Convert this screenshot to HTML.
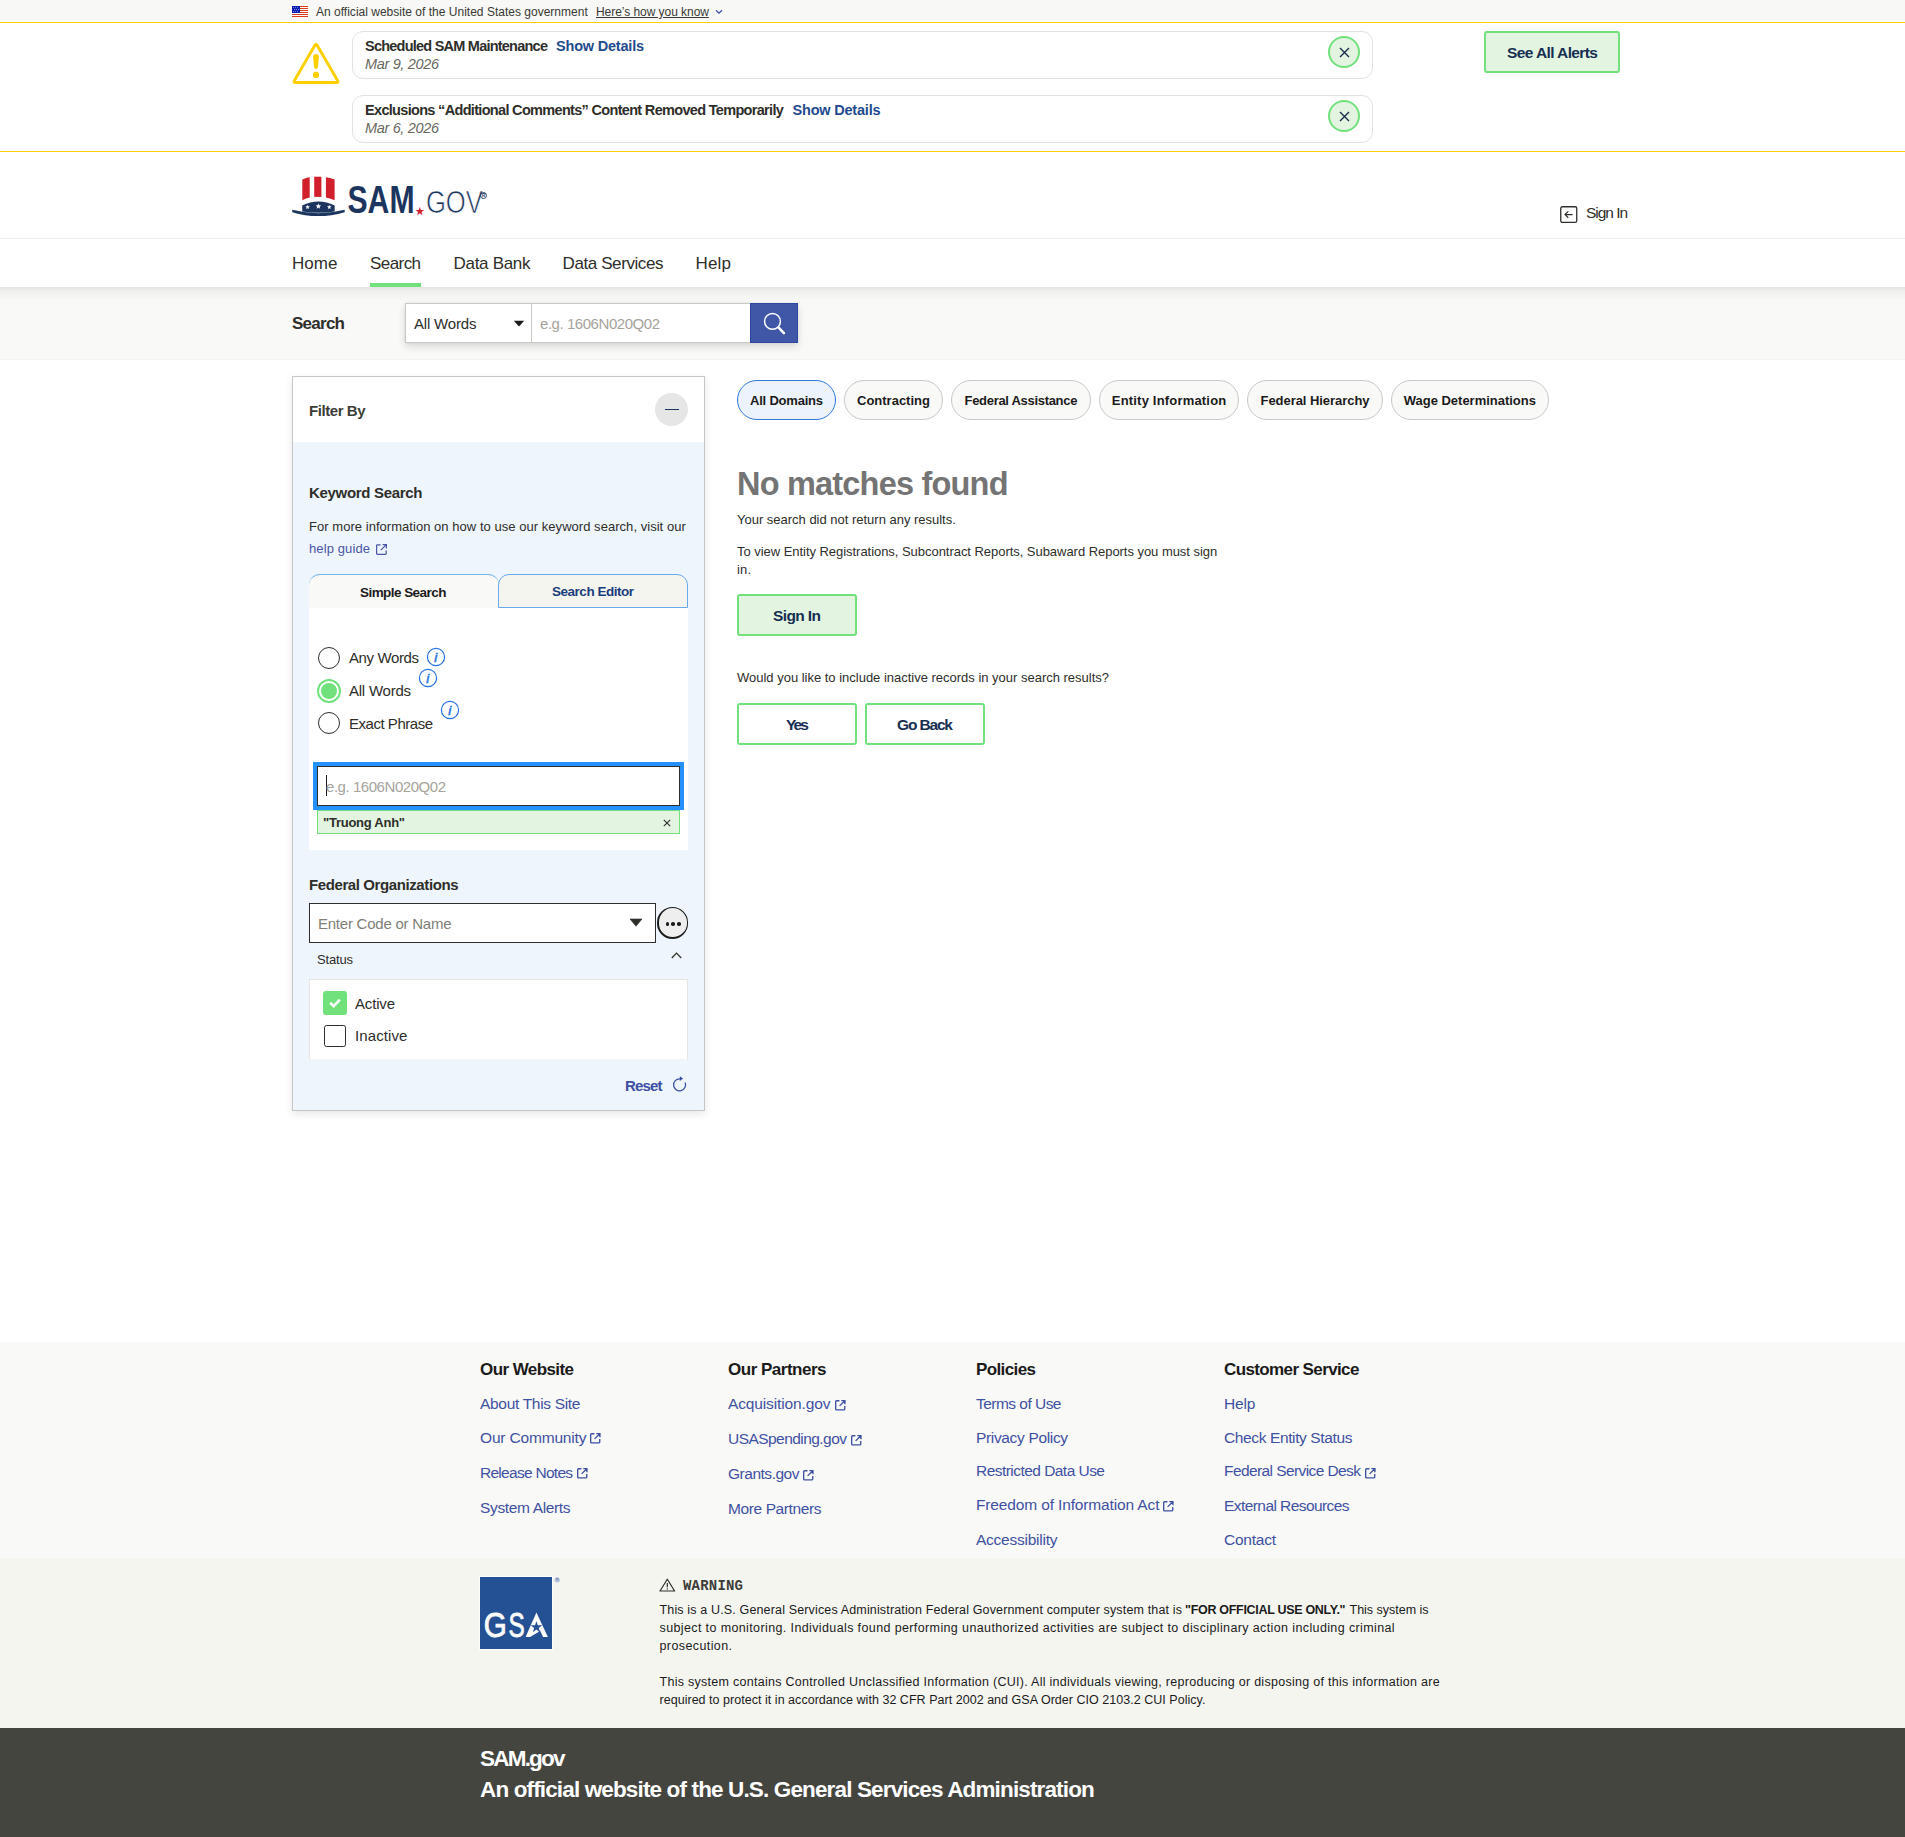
<!DOCTYPE html>
<html lang="en"><head>
<meta charset="utf-8">
<title>SAM.gov | Search</title>
<style>
*{box-sizing:border-box;margin:0;padding:0}
html,body{width:1905px;height:1837px;overflow:hidden;background:#fff}
body{position:relative;font-family:"Liberation Sans",sans-serif;color:#2e2e2a;font-size:15px}
.a{position:absolute}
.t{position:absolute;white-space:nowrap;line-height:20px;height:20px}
.b{font-weight:bold}
.i{font-style:italic}
.lnk{color:#3f51a8}
.box{position:absolute}
svg{position:absolute;overflow:visible}
</style>
</head>
<body>
<!-- gov banner -->
<div class="box" style="left:0;top:0;width:1905px;height:21px;background:#f8f8f6"></div>
<svg style="left:291px;top:5px" width="18" height="13" viewBox="-1 -1 18 13">
<rect x="-1" y="-1" width="18" height="13" fill="#fcfcfc"></rect>
<rect width="16" height="11" fill="#fff"></rect>
<g fill="#dc3a1c"><rect y="0" width="16" height="1"></rect><rect y="2" width="16" height="1"></rect><rect y="4" width="16" height="1"></rect><rect y="6" width="16" height="1"></rect><rect y="8" width="16" height="1"></rect><rect y="10" width="16" height="1"></rect></g>
<rect width="8" height="7" fill="#0b1fb4"></rect><circle cx="1.4" cy="1.6" r="0.45" fill="#fff"></circle><circle cx="3.5" cy="1.6" r="0.45" fill="#fff"></circle><circle cx="5.6" cy="1.6" r="0.45" fill="#fff"></circle><circle cx="2.4" cy="3.5" r="0.45" fill="#fff"></circle><circle cx="4.5" cy="3.5" r="0.45" fill="#fff"></circle><circle cx="6.6" cy="3.5" r="0.45" fill="#fff"></circle><circle cx="1.4" cy="5.4" r="0.45" fill="#fff"></circle><circle cx="3.5" cy="5.4" r="0.45" fill="#fff"></circle><circle cx="5.6" cy="5.4" r="0.45" fill="#fff"></circle>
</svg>
<span class="t" style="left: 316px; top: 2px; font-size: 12px; color: rgb(58, 58, 53); letter-spacing: 0.01px;">An official website of the United States government</span>
<span class="t" style="left: 596px; top: 2px; font-size: 12px; color: rgb(58, 58, 53); text-decoration: underline; letter-spacing: -0.05px;">Here’s how you know</span>
<svg style="left:715px;top:9px" width="8" height="6" viewBox="0 0 8 6"><path d="M1 1.2 L4 4.2 L7 1.2" fill="none" stroke="#3f51a8" stroke-width="1.3"></path></svg>
<!-- alerts -->
<div class="box" style="left:0;top:22px;width:1905px;height:1px;background:#face00"></div>
<div class="box" style="left:0;top:151px;width:1905px;height:1px;background:#face00"></div>
<svg style="left:291px;top:41px" width="50" height="44" viewBox="0 0 50 44">
<path d="M23.9 4.2 Q25 2.3 26.1 4.2 L46.6 39.6 Q47.7 41.5 45.5 41.5 L4.5 41.5 Q2.3 41.5 3.4 39.6 Z" fill="none" stroke="#fad000" stroke-width="2.9" stroke-linejoin="round"></path>
<path d="M22.05 16 Q22.05 13.1 25 13.1 Q27.95 13.1 27.95 16 L26.9 26.2 Q26.9 28 25 28 Q23.1 28 23.1 26.2 Z" fill="#fad000"></path>
<circle cx="25" cy="33.9" r="3.15" fill="#fad000"></circle>
</svg>
<div class="box" style="left:352px;top:31px;width:1021px;height:48px;border:1px solid #e2e2de;border-radius:11px;background:#fff"></div>
<div class="box" style="left:352px;top:95px;width:1021px;height:48px;border:1px solid #e2e2de;border-radius:11px;background:#fff"></div>
<span class="t b" style="left: 365px; top: 36px; font-size: 14.5px; letter-spacing: -0.77px;">Scheduled SAM Maintenance</span>
<span class="t b" style="left: 556px; top: 36px; font-size: 14.5px; color: rgb(31, 75, 142); letter-spacing: -0.2px;">Show Details</span>
<span class="t i" style="left: 365px; top: 54px; font-size: 14.5px; color: rgb(104, 104, 96); letter-spacing: -0.34px;">Mar 9, 2026</span>
<span class="t b" style="left: 365px; top: 100px; font-size: 14.5px; letter-spacing: -0.68px;">Exclusions “Additional Comments” Content Removed Temporarily</span>
<span class="t b" style="left: 792.5px; top: 100px; font-size: 14.5px; color: rgb(31, 75, 142); letter-spacing: -0.2px;">Show Details</span>
<span class="t i" style="left: 365px; top: 118px; font-size: 14.5px; color: rgb(104, 104, 96); letter-spacing: -0.34px;">Mar 6, 2026</span>
<div class="box" style="left:1328px;top:36px;width:32px;height:32px;border:2px solid #70e17b;border-radius:50%;background:#e3f5e1"></div>
<div class="box" style="left:1328px;top:100px;width:32px;height:32px;border:2px solid #70e17b;border-radius:50%;background:#e3f5e1"></div>
<svg style="left:1338.5px;top:46.5px" width="11" height="11" viewBox="0 0 11 11"><path d="M1 1 L10 10 M10 1 L1 10" stroke="#1b2b4b" stroke-width="1.4"></path></svg>
<svg style="left:1338.5px;top:110.5px" width="11" height="11" viewBox="0 0 11 11"><path d="M1 1 L10 10 M10 1 L1 10" stroke="#1b2b4b" stroke-width="1.4"></path></svg>
<div class="box" style="left:1484px;top:31px;width:136px;height:42px;border:2px solid #70e17b;border-radius:3px;background:#e3f5e1"></div>
<span class="t b" style="left: 1507px; top: 43px; font-size: 15.5px; color: rgb(22, 46, 81); letter-spacing: -0.6px;">See All Alerts</span>

<!-- header -->
<svg style="left:290px;top:174px" width="200" height="46" viewBox="0 0 200 46">
<g fill="#d11f2c">
<path d="M12.3 5.6 Q16 3.7 19.7 3.2 L19.7 23.6 Q16 24.3 12.3 26.2 Z"></path>
<path d="M24.2 2.7 L31.4 2.7 L31.4 22.9 L24.2 22.9 Z"></path>
<path d="M35.9 3.2 Q39.6 3.7 44.6 5.6 L44.6 26.2 Q39.6 24.3 35.9 23.6 Z"></path>
</g>
<path d="M12.2 31.4 Q28.4 23.6 44.7 31.4 L44.7 37.4 Q28.4 40 12.2 37.4 Z" fill="#1c355e"></path>
<path d="M2.3 35.8 Q28 42.6 54.7 35.8 L54.7 38.2 Q28 46 2.3 38.2 Z" fill="#1c355e"></path>
<g fill="#fff">
<path d="M17.6 30.7 l0.62 1.55 1.66 0.1 -1.28 1.07 0.42 1.62 -1.42 -0.9 -1.42 0.9 0.42 -1.62 -1.28 -1.07 1.66 -0.1z"></path>
<path d="M28.4 29.4 l0.75 1.9 2.03 0.12 -1.57 1.3 0.52 1.98 -1.73 -1.1 -1.73 1.1 0.52 -1.98 -1.57 -1.3 2.03 -0.12z"></path>
<path d="M39.3 30.7 l0.62 1.55 1.66 0.1 -1.28 1.07 0.42 1.62 -1.42 -0.9 -1.42 0.9 0.42 -1.62 -1.28 -1.07 1.66 -0.1z"></path>
</g>
<text x="57.5" y="38.6" font-family="Liberation Sans, sans-serif" font-weight="bold" font-size="39.2" fill="#1c355e" textLength="67" lengthAdjust="spacingAndGlyphs">SAM</text>
<path d="M129.8 33 l1.05 3.05 3.2 0.05 -2.55 1.95 0.93 3.1 -2.63 -1.85 -2.63 1.85 0.93 -3.1 -2.55 -1.95 3.2 -0.05z" fill="#d11f2c"></path>
<text x="135.9" y="38.8" font-family="Liberation Sans, sans-serif" font-size="31.4" fill="#1c355e" textLength="57" lengthAdjust="spacingAndGlyphs" stroke="#fff" stroke-width="0.7">GOV</text>
<circle cx="193.5" cy="21.5" r="3" fill="none" stroke="#1c355e" stroke-width="0.9"></circle>
<text x="191.9" y="23.3" font-family="Liberation Sans, sans-serif" font-weight="bold" font-size="4.8" fill="#1c355e">R</text>
</svg>
<svg style="left:1560px;top:206px" width="18" height="18" viewBox="0 0 18 18">
<rect x="0.75" y="0.75" width="16" height="15.7" rx="1.6" fill="none" stroke="#2e2e2a" stroke-width="1.3"></rect>
<path d="M12.6 8.6 L5.2 8.6 M8.3 5.4 L5 8.6 L8.3 11.8" fill="none" stroke="#2e2e2a" stroke-width="1.2"></path>
</svg>
<span class="t" style="left: 1586px; top: 203px; font-size: 15.5px; letter-spacing: -1.04px;">Sign In</span>
<div class="box" style="left:0;top:238px;width:1905px;height:1px;background:#f0f0ec"></div>
<!-- nav -->
<div class="box" style="left:0;top:287px;width:1905px;height:73px;background:#f9f9f7;border-bottom:1px solid #f3f3f0"></div>
<div class="box" style="left:0;top:287px;width:1905px;height:14px;background:linear-gradient(#e4e4e2,#f0f0ee 35%,#f9f9f7)"></div>
<span class="t" style="left: 292px; top: 254px; font-size: 17px; letter-spacing: 0.05px;">Home</span>
<span class="t" style="left: 370px; top: 254px; font-size: 17px; letter-spacing: -0.57px;">Search</span>
<span class="t" style="left: 453.5px; top: 254px; font-size: 17px; letter-spacing: -0.3px;">Data Bank</span>
<span class="t" style="left: 562.5px; top: 254px; font-size: 17px; letter-spacing: -0.4px;">Data Services</span>
<span class="t" style="left: 695.5px; top: 254px; font-size: 17px; letter-spacing: 0.18px;">Help</span>
<div class="box" style="left:370px;top:283px;width:51px;height:4px;background:#70e17b"></div>
<!-- searchbar -->
<span class="t b" style="left: 292px; top: 314px; font-size: 17px; letter-spacing: -0.74px;">Search</span>
<div class="box" style="left:405px;top:303px;width:393px;height:40px;box-shadow:0 4px 8px rgba(0,0,0,.12),0 0 3px rgba(0,0,0,.08)"></div>
<div class="box" style="left:405px;top:303px;width:127px;height:40px;background:#fff;border:1px solid #c9c9c5"></div>
<div class="box" style="left:531px;top:303px;width:220px;height:40px;background:#fff;border:1px solid #c9c9c5"></div>
<span class="t" style="left: 414px; top: 314px; font-size: 15px; letter-spacing: -0.18px;">All Words</span>
<svg style="left:513px;top:320px" width="12" height="7" viewBox="0 0 12 7"><path d="M0.8 0.8 L11.2 0.8 L6 6.4 Z" fill="#1b1b1b"></path></svg>
<span class="t" style="left: 540px; top: 314px; font-size: 15px; color: rgb(165, 163, 155); letter-spacing: -0.45px;">e.g. 1606N020Q02</span>
<div class="box" style="left:750px;top:303px;width:48px;height:40px;background:#4057a8;border:1px solid #3049a0"></div>
<svg style="left:750px;top:303px" width="48" height="40" viewBox="0 0 48 40">
<circle cx="22.5" cy="18.4" r="7.9" fill="none" stroke="#fff" stroke-width="1.5"></circle>
<path d="M28.4 24.4 L33.9 30.1" stroke="#fff" stroke-width="2.6" stroke-linecap="round"></path>
</svg>

<!-- filter panel -->
<div class="box" style="left:292px;top:376px;width:413px;height:735px;background:#eef5fc;border:1px solid #c6c6c6;box-shadow:0 3px 8px rgba(0,0,0,.10)"></div>
<div class="box" style="left:293px;top:377px;width:411px;height:65px;background:#fff"></div>
<span class="t b" style="left: 309px; top: 401px; font-size: 15px; color: rgb(61, 61, 56); letter-spacing: -0.44px;">Filter By</span>
<div class="box" style="left:655px;top:393px;width:33px;height:33px;border-radius:50%;background:#e6e6e6"></div>
<div class="box" style="left:665px;top:409px;width:14px;height:1.4px;background:#1c355e"></div>
<span class="t b" style="left: 309px; top: 483px; font-size: 15px; letter-spacing: -0.31px;">Keyword Search</span>
<span class="t" style="left: 309px; top: 517px; font-size: 13px; letter-spacing: 0.04px;">For more information on how to use our keyword search, visit our</span>
<span class="t" style="left: 309px; top: 539px; font-size: 13px; color: rgb(74, 85, 168); letter-spacing: 0.11px;">help guide</span>
<svg style="left:374.5px;top:542.5px" width="13" height="13" viewBox="0 0 13 13"><path d="M5.6 1.8 H2.4 Q1.6 1.8 1.6 2.6 V10.6 Q1.6 11.4 2.4 11.4 H10.4 Q11.2 11.4 11.2 10.6 V7.4 M7.6 1.6 H11.4 V5.4 M11.3 1.7 L5.8 7.2" fill="none" stroke="#4a55a8" stroke-width="1.2"></path></svg>
<!-- tabs -->
<div class="box" style="left:309px;top:607px;width:379px;height:243px;background:#fff"></div>
<div class="box" style="left:309px;top:574px;width:190px;height:34px;background:#f9f9f7;border-top:1px solid #73b3e7;border-radius:11px 11px 0 0"></div>
<div class="box" style="left:498px;top:574px;width:190px;height:34px;background:#f5f5f0;border:1px solid #6aa9ee;border-radius:11px 11px 0 0"></div>
<span class="t b" style="left: 360px; top: 583px; font-size: 13.5px; color: rgb(27, 27, 27); letter-spacing: -0.55px;">Simple Search</span>
<span class="t b" style="left: 552px; top: 582px; font-size: 13.5px; color: rgb(26, 61, 124); letter-spacing: -0.48px;">Search Editor</span>
<!-- radios -->
<div class="box" style="left:318px;top:647px;width:22px;height:22px;border:1.6px solid #2e2e2a;border-radius:50%;background:#fff"></div>
<div class="box" style="left:317px;top:679px;width:24px;height:24px;border:2px solid #70e17b;border-radius:50%;background:#fff"></div>
<div class="box" style="left:321px;top:683px;width:16px;height:16px;border-radius:50%;background:#70e17b"></div>
<div class="box" style="left:318px;top:712px;width:22px;height:22px;border:1.6px solid #2e2e2a;border-radius:50%;background:#fff"></div>
<span class="t" style="left: 349px; top: 648px; font-size: 15px; letter-spacing: -0.39px;">Any Words</span>
<span class="t" style="left: 349px; top: 681px; font-size: 15px; letter-spacing: -0.24px;">All Words</span>
<span class="t" style="left: 349px; top: 714px; font-size: 15px; letter-spacing: -0.47px;">Exact Phrase</span>
<svg style="left:426.0px;top:646.6px" width="20" height="20" viewBox="0 0 20 20"><circle cx="10" cy="10" r="8.6" fill="#fff" stroke="#2672de" stroke-width="1.2"></circle><text x="8.3" y="14.7" font-family="Liberation Sans, sans-serif" font-style="italic" font-size="13.5" fill="#2672de" stroke="#2672de" stroke-width="0.55">i</text></svg>
<svg style="left:418.4px;top:667.5px" width="20" height="20" viewBox="0 0 20 20"><circle cx="10" cy="10" r="8.6" fill="#fff" stroke="#2672de" stroke-width="1.2"></circle><text x="8.3" y="14.7" font-family="Liberation Sans, sans-serif" font-style="italic" font-size="13.5" fill="#2672de" stroke="#2672de" stroke-width="0.55">i</text></svg>
<svg style="left:440.4px;top:700.0px" width="20" height="20" viewBox="0 0 20 20"><circle cx="10" cy="10" r="8.6" fill="#fff" stroke="#2672de" stroke-width="1.2"></circle><text x="8.3" y="14.7" font-family="Liberation Sans, sans-serif" font-style="italic" font-size="13.5" fill="#2672de" stroke="#2672de" stroke-width="0.55">i</text></svg>
<!-- keyword input -->
<div class="box" style="left:313px;top:762px;width:371px;height:48px;background:#2491ff"></div>
<div class="box" style="left:317px;top:766px;width:363px;height:40px;background:#fff;border:1.4px solid #2e2e2a"></div>
<div class="box" style="left:326px;top:775px;width:1px;height:21px;background:#1b1b1b"></div>
<span class="t" style="left: 326px; top: 777px; font-size: 15px; color: rgb(165, 163, 155); letter-spacing: -0.45px;">e.g. 1606N020Q02</span>
<div class="box" style="left:317px;top:810px;width:363px;height:24px;background:#e3f5e1;border:1px solid #70e17b"></div>
<span class="t b" style="left: 323px; top: 813px; font-size: 13px; letter-spacing: -0.25px;">"Truong Anh"</span>
<svg style="left:663px;top:819px" width="8" height="8" viewBox="0 0 8 8"><path d="M0.8 0.8 L7.2 7.2 M7.2 0.8 L0.8 7.2" stroke="#2e2e2a" stroke-width="1.1"></path></svg>
<!-- fed orgs -->
<span class="t b" style="left: 309px; top: 875px; font-size: 15px; letter-spacing: -0.4px;">Federal Organizations</span>
<div class="box" style="left:309px;top:903px;width:347px;height:40px;background:#fff;border:1.4px solid #2e2e2a"></div>
<span class="t" style="left: 318px; top: 914px; font-size: 15px; color: rgb(128, 128, 120); letter-spacing: -0.24px;">Enter Code or Name</span>
<svg style="left:629px;top:918px" width="14" height="9" viewBox="0 0 14 9"><path d="M1 1 L13 1 L7 8.2 Z" fill="#2e2e2a" stroke="#2e2e2a" stroke-width="0.6" stroke-linejoin="round"></path></svg>
<div class="box" style="left:656.5px;top:907px;width:31.5px;height:31.5px;border:2px solid #1b1b1b;border-top-width:1.5px;border-right-width:1.5px;border-radius:50%;background:#eeeeee"></div>
<div class="box" style="left:665.8px;top:922.4px;width:3.6px;height:3.6px;border-radius:50%;background:#1b1b1b"></div>
<div class="box" style="left:671.4px;top:922.4px;width:3.6px;height:3.6px;border-radius:50%;background:#1b1b1b"></div>
<div class="box" style="left:677px;top:922.4px;width:3.6px;height:3.6px;border-radius:50%;background:#1b1b1b"></div>
<span class="t" style="left: 317px; top: 950px; font-size: 13px; letter-spacing: -0.17px;">Status</span>
<svg style="left:671px;top:952px" width="11" height="7" viewBox="0 0 11 7"><path d="M0.8 6 L5.5 1.2 L10.2 6" fill="none" stroke="#2e2e2a" stroke-width="1.2"></path></svg>
<div class="box" style="left:309px;top:979px;width:379px;height:81px;background:#fff;border:1px solid #e6e6e2;border-bottom-color:#f4f4f2"></div>
<div class="box" style="left:323px;top:991px;width:24px;height:24px;background:#70e17b;border-radius:3px"></div>
<svg style="left:323px;top:991px" width="24" height="24" viewBox="0 0 24 24"><path d="M7.2 11.8 L10.7 15.2 L16.8 8.6" fill="none" stroke="#fff" stroke-width="2.6"></path></svg>
<div class="box" style="left:324px;top:1025px;width:22px;height:22px;background:#fff;border:1.5px solid #2e2e2a;border-radius:2.5px"></div>
<span class="t" style="left: 355px; top: 994px; font-size: 15px; letter-spacing: -0.17px;">Active</span>
<span class="t" style="left: 355px; top: 1026px; font-size: 15px; letter-spacing: 0.11px;">Inactive</span>
<span class="t b" style="left: 625px; top: 1076px; font-size: 15px; color: rgb(61, 79, 163); letter-spacing: -0.84px;">Reset</span>
<svg style="left:672px;top:1075px" width="16" height="17" viewBox="0 0 16 17"><path d="M13.16 7.55 A6 6 0 1 1 7.9 3.8" fill="none" stroke="#3a4fa5" stroke-width="1.25"></path><path d="M7.8 1.2 L7.8 6 L11 3.6 Z" fill="#3449a0"></path></svg>

<!-- results -->
<div class="box" style="left:737px;top:380px;width:99px;height:40px;border-radius:20px;background:#ecf3fc;border:1px solid #2e79e0"></div>
<span class="t b" style="left: 750px; top: 391px; font-size: 13px; color: rgb(27, 27, 27); letter-spacing: -0.21px;">All Domains</span>
<div class="box" style="left:844px;top:380px;width:99px;height:40px;border-radius:20px;background:#f9f9f7;border:1px solid #c9c9c9"></div>
<span class="t b" style="left: 857px; top: 391px; font-size: 13px; color: rgb(27, 27, 27); letter-spacing: 0px;">Contracting</span>
<div class="box" style="left:951px;top:380px;width:140px;height:40px;border-radius:20px;background:#f9f9f7;border:1px solid #c9c9c9"></div>
<span class="t b" style="left: 964.5px; top: 391px; font-size: 13px; color: rgb(27, 27, 27); letter-spacing: -0.3px;">Federal Assistance</span>
<div class="box" style="left:1099px;top:380px;width:140px;height:40px;border-radius:20px;background:#f9f9f7;border:1px solid #c9c9c9"></div>
<span class="t b" style="left: 1111.8px; top: 391px; font-size: 13px; color: rgb(27, 27, 27); letter-spacing: 0.19px;">Entity Information</span>
<div class="box" style="left:1247px;top:380px;width:136px;height:40px;border-radius:20px;background:#f9f9f7;border:1px solid #c9c9c9"></div>
<span class="t b" style="left: 1260.5px; top: 391px; font-size: 13px; color: rgb(27, 27, 27); letter-spacing: -0.05px;">Federal Hierarchy</span>
<div class="box" style="left:1390.5px;top:380px;width:158.5px;height:40px;border-radius:20px;background:#f9f9f7;border:1px solid #c9c9c9"></div>
<span class="t b" style="left: 1403.8px; top: 391px; font-size: 13px; color: rgb(27, 27, 27); letter-spacing: -0.02px;">Wage Determinations</span>
<span class="t b" style="left: 737px; top: 464px; font-size: 32.5px; line-height: 40px; height: 40px; color: rgb(116, 116, 116); letter-spacing: -0.8px;">No matches found</span>
<span class="t" style="left: 737px; top: 510px; font-size: 13px; letter-spacing: -0.01px;">Your search did not return any results.</span>
<span class="t" style="left: 737px; top: 542px; font-size: 13px; letter-spacing: -0.04px;">To view Entity Registrations, Subcontract Reports, Subaward Reports you must sign</span>
<span class="t" style="left: 737px; top: 560px; font-size: 13px; letter-spacing: 0.13px;">in.</span>
<div class="box" style="left:737px;top:594px;width:120px;height:42px;border:2px solid #70e17b;border-radius:3px;background:#e3f5e1"></div>
<span class="t b" style="left: 773px; top: 606px; font-size: 15.5px; color: rgb(22, 46, 81); letter-spacing: -0.61px;">Sign In</span>
<span class="t" style="left: 737px; top: 668px; font-size: 13px; letter-spacing: -0.01px;">Would you like to include inactive records in your search results?</span>
<div class="box" style="left:737px;top:703px;width:120px;height:42px;border:2px solid #70e17b;border-radius:3px;background:#fff"></div>
<div class="box" style="left:865px;top:703px;width:120px;height:42px;border:2px solid #70e17b;border-radius:3px;background:#fff"></div>
<span class="t b" style="left: 786px; top: 715px; font-size: 15.5px; color: rgb(22, 46, 81); letter-spacing: -1.87px;">Yes</span>
<span class="t b" style="left: 897px; top: 715px; font-size: 15.5px; color: rgb(22, 46, 81); letter-spacing: -1.15px;">Go Back</span>

<!-- footer -->
<div class="box" style="left:0;top:1342px;width:1905px;height:216px;background:#f9f9f7"></div>
<div class="box" style="left:0;top:1558px;width:1905px;height:170px;background:#f5f5f0"></div>
<div class="box" style="left:0;top:1728px;width:1905px;height:109px;background:#454540"></div>
<span class="t b" style="left: 480px; top: 1360px; font-size: 17px; color: rgb(27, 27, 27); letter-spacing: -0.58px;">Our Website</span>
<span class="t b" style="left: 728px; top: 1360px; font-size: 17px; color: rgb(27, 27, 27); letter-spacing: -0.49px;">Our Partners</span>
<span class="t b" style="left: 976px; top: 1360px; font-size: 17px; color: rgb(27, 27, 27); letter-spacing: -0.61px;">Policies</span>
<span class="t b" style="left: 1224px; top: 1360px; font-size: 17px; color: rgb(27, 27, 27); letter-spacing: -0.61px;">Customer Service</span>
<span class="t" style="left: 480px; top: 1393.5px; font-size: 15.5px; color: rgb(63, 81, 163); letter-spacing: -0.31px;">About This Site</span>
<span class="t" style="left: 480px; top: 1427.5px; font-size: 15.5px; color: rgb(63, 81, 163); letter-spacing: -0.17px;">Our Community</span>
<svg style="left:589.4px;top:1432.4px" width="12.5" height="12.5" viewBox="0 0 12 12"><path d="M5.2 1.7 H2.5 Q1.6 1.7 1.6 2.6 V9.5 Q1.6 10.4 2.5 10.4 H9.4 Q10.3 10.4 10.3 9.5 V6.8 M7 1.5 H10.5 V5 M10.4 1.6 L5.4 6.6" fill="none" stroke="#3f51a3" stroke-width="1.3"></path></svg>
<span class="t" style="left: 480px; top: 1462.5px; font-size: 15.5px; color: rgb(63, 81, 163); letter-spacing: -0.72px;">Release Notes</span>
<svg style="left:576.1px;top:1467.4px" width="12.5" height="12.5" viewBox="0 0 12 12"><path d="M5.2 1.7 H2.5 Q1.6 1.7 1.6 2.6 V9.5 Q1.6 10.4 2.5 10.4 H9.4 Q10.3 10.4 10.3 9.5 V6.8 M7 1.5 H10.5 V5 M10.4 1.6 L5.4 6.6" fill="none" stroke="#3f51a3" stroke-width="1.3"></path></svg>
<span class="t" style="left: 480px; top: 1497.5px; font-size: 15.5px; color: rgb(63, 81, 163); letter-spacing: -0.35px;">System Alerts</span>
<span class="t" style="left: 728px; top: 1393.5px; font-size: 15.5px; color: rgb(63, 81, 163); letter-spacing: -0.13px;">Acquisition.gov</span>
<svg style="left:833.7px;top:1398.8px" width="12.5" height="12.5" viewBox="0 0 12 12"><path d="M5.2 1.7 H2.5 Q1.6 1.7 1.6 2.6 V9.5 Q1.6 10.4 2.5 10.4 H9.4 Q10.3 10.4 10.3 9.5 V6.8 M7 1.5 H10.5 V5 M10.4 1.6 L5.4 6.6" fill="none" stroke="#3f51a3" stroke-width="1.3"></path></svg>
<span class="t" style="left: 728px; top: 1428.5px; font-size: 15.5px; color: rgb(63, 81, 163); letter-spacing: -0.55px;">USASpending.gov</span>
<svg style="left:850.2px;top:1434.0px" width="12.5" height="12.5" viewBox="0 0 12 12"><path d="M5.2 1.7 H2.5 Q1.6 1.7 1.6 2.6 V9.5 Q1.6 10.4 2.5 10.4 H9.4 Q10.3 10.4 10.3 9.5 V6.8 M7 1.5 H10.5 V5 M10.4 1.6 L5.4 6.6" fill="none" stroke="#3f51a3" stroke-width="1.3"></path></svg>
<span class="t" style="left: 728px; top: 1463.5px; font-size: 15.5px; color: rgb(63, 81, 163); letter-spacing: -0.48px;">Grants.gov</span>
<svg style="left:802.2px;top:1469.0px" width="12.5" height="12.5" viewBox="0 0 12 12"><path d="M5.2 1.7 H2.5 Q1.6 1.7 1.6 2.6 V9.5 Q1.6 10.4 2.5 10.4 H9.4 Q10.3 10.4 10.3 9.5 V6.8 M7 1.5 H10.5 V5 M10.4 1.6 L5.4 6.6" fill="none" stroke="#3f51a3" stroke-width="1.3"></path></svg>
<span class="t" style="left: 728px; top: 1498.5px; font-size: 15.5px; color: rgb(63, 81, 163); letter-spacing: -0.39px;">More Partners</span>
<span class="t" style="left: 976px; top: 1393.5px; font-size: 15.5px; color: rgb(63, 81, 163); letter-spacing: -0.53px;">Terms of Use</span>
<span class="t" style="left: 976px; top: 1427.5px; font-size: 15.5px; color: rgb(63, 81, 163); letter-spacing: -0.34px;">Privacy Policy</span>
<span class="t" style="left: 976px; top: 1460.5px; font-size: 15.5px; color: rgb(63, 81, 163); letter-spacing: -0.54px;">Restricted Data Use</span>
<span class="t" style="left: 976px; top: 1495px; font-size: 15.5px; color: rgb(63, 81, 163); letter-spacing: -0.14px;">Freedom of Information Act</span>
<svg style="left:1161.7px;top:1499.7px" width="12.5" height="12.5" viewBox="0 0 12 12"><path d="M5.2 1.7 H2.5 Q1.6 1.7 1.6 2.6 V9.5 Q1.6 10.4 2.5 10.4 H9.4 Q10.3 10.4 10.3 9.5 V6.8 M7 1.5 H10.5 V5 M10.4 1.6 L5.4 6.6" fill="none" stroke="#3f51a3" stroke-width="1.3"></path></svg>
<span class="t" style="left: 976px; top: 1529.5px; font-size: 15.5px; color: rgb(63, 81, 163); letter-spacing: -0.24px;">Accessibility</span>
<span class="t" style="left: 1224px; top: 1393.5px; font-size: 15.5px; color: rgb(63, 81, 163); letter-spacing: -0.13px;">Help</span>
<span class="t" style="left: 1224px; top: 1427.5px; font-size: 15.5px; color: rgb(63, 81, 163); letter-spacing: -0.38px;">Check Entity Status</span>
<span class="t" style="left: 1224px; top: 1460.5px; font-size: 15.5px; color: rgb(63, 81, 163); letter-spacing: -0.59px;">Federal Service Desk</span>
<svg style="left:1364.4px;top:1466.6px" width="12.5" height="12.5" viewBox="0 0 12 12"><path d="M5.2 1.7 H2.5 Q1.6 1.7 1.6 2.6 V9.5 Q1.6 10.4 2.5 10.4 H9.4 Q10.3 10.4 10.3 9.5 V6.8 M7 1.5 H10.5 V5 M10.4 1.6 L5.4 6.6" fill="none" stroke="#3f51a3" stroke-width="1.3"></path></svg>
<span class="t" style="left: 1224px; top: 1495.5px; font-size: 15.5px; color: rgb(63, 81, 163); letter-spacing: -0.57px;">External Resources</span>
<span class="t" style="left: 1224px; top: 1529.5px; font-size: 15.5px; color: rgb(63, 81, 163); letter-spacing: -0.24px;">Contact</span>
<!-- gsa -->
<div class="box" style="left:479px;top:1576px;width:74px;height:74px;background:#fdfdfb"></div>
<div class="box" style="left:480px;top:1577px;width:72px;height:72px;background:#245094"></div>
<svg style="left:480px;top:1577px" width="82" height="72" viewBox="0 0 82 72">
<text x="3.8" y="60.1" font-family="Liberation Sans, sans-serif" font-size="35.5" fill="#fbfbf8" stroke="#fbfbf8" stroke-width="0.9" textLength="23" lengthAdjust="spacingAndGlyphs">G</text>
<text x="28.6" y="60.1" font-family="Liberation Sans, sans-serif" font-size="35.5" fill="#fbfbf8" stroke="#fbfbf8" stroke-width="0.9" textLength="16.2" lengthAdjust="spacingAndGlyphs">S</text>
<path d="M56.41 35.6 L67.9 59.95 L45.6 59.95 Z" fill="#fbfbf8"></path>
<path d="M56.41 44.13 L57.79 48.37 L62.25 48.37 L58.64 50.99 L60.02 55.24 L56.41 52.62 L52.80 55.24 L54.18 50.99 L50.57 48.37 L55.03 48.37Z" fill="#245094"></path>
<path d="M50.1 59.95 L58.5 55 L59.8 53.1 L63.05 59.95 Z" fill="#245094"></path>
<circle cx="77.2" cy="2.9" r="2.2" fill="#dfe6f0" stroke="#8fa6c8" stroke-width="0.8"></circle>
<text x="75.9" y="4.3" font-family="Liberation Sans, sans-serif" font-weight="bold" font-size="3.6" fill="#5a7bb0">R</text>
</svg>
<svg style="left:659px;top:1578px" width="17" height="14" viewBox="0 0 17 14"><path d="M8.3 1.2 L15.6 13 L1 13 Z" fill="none" stroke="#2e2e2a" stroke-width="1.2" stroke-linejoin="round"></path><path d="M8.3 5 V9.3 M8.3 10.3 V11.6" stroke="#2e2e2a" stroke-width="1.2"></path></svg>
<span class="t b" style="left: 683px; top: 1576px; font-size: 14px; font-family: &quot;Liberation Mono&quot;, monospace; color: rgb(61, 61, 56); letter-spacing: 0.2px;">WARNING</span>
<span class="t" style="left: 659.5px; top: 1600px; font-size: 12.5px; color: rgb(27, 27, 27); letter-spacing: 0.15px;">This is a U.S. General Services Administration Federal Government computer system that is</span>
<span class="t b" style="left: 1185px; top: 1600px; font-size: 12.5px; color: rgb(27, 27, 27); letter-spacing: -0.3px;">"FOR OFFICIAL USE ONLY."</span>
<span class="t" style="left: 1349.5px; top: 1600px; font-size: 12.5px; color: rgb(27, 27, 27); letter-spacing: -0.01px;">This system is</span>
<span class="t" style="left: 659.5px; top: 1618px; font-size: 12.5px; color: rgb(27, 27, 27); letter-spacing: 0.38px;">subject to monitoring. Individuals found performing unauthorized activities are subject to disciplinary action including criminal</span>
<span class="t" style="left: 659.5px; top: 1636px; font-size: 12.5px; color: rgb(27, 27, 27); letter-spacing: 0.4px;">prosecution.</span>
<span class="t" style="left: 659.5px; top: 1672px; font-size: 12.5px; color: rgb(27, 27, 27); letter-spacing: 0.28px;">This system contains Controlled Unclassified Information (CUI). All individuals viewing, reproducing or disposing of this information are</span>
<span class="t" style="left: 659.5px; top: 1690px; font-size: 12.5px; color: rgb(27, 27, 27); letter-spacing: 0.03px;">required to protect it in accordance with 32 CFR Part 2002 and GSA Order CIO 2103.2 CUI Policy.</span>
<span class="t b" style="left: 480px; top: 1746px; font-size: 22.5px; line-height: 26px; height: 26px; color: rgb(255, 255, 255); letter-spacing: -1.79px;">SAM.gov</span>
<span class="t b" style="left: 480px; top: 1777px; font-size: 22.5px; line-height: 26px; height: 26px; color: rgb(255, 255, 255); letter-spacing: -0.86px;">An official website of the U.S. General Services Administration</span>



</body></html>
